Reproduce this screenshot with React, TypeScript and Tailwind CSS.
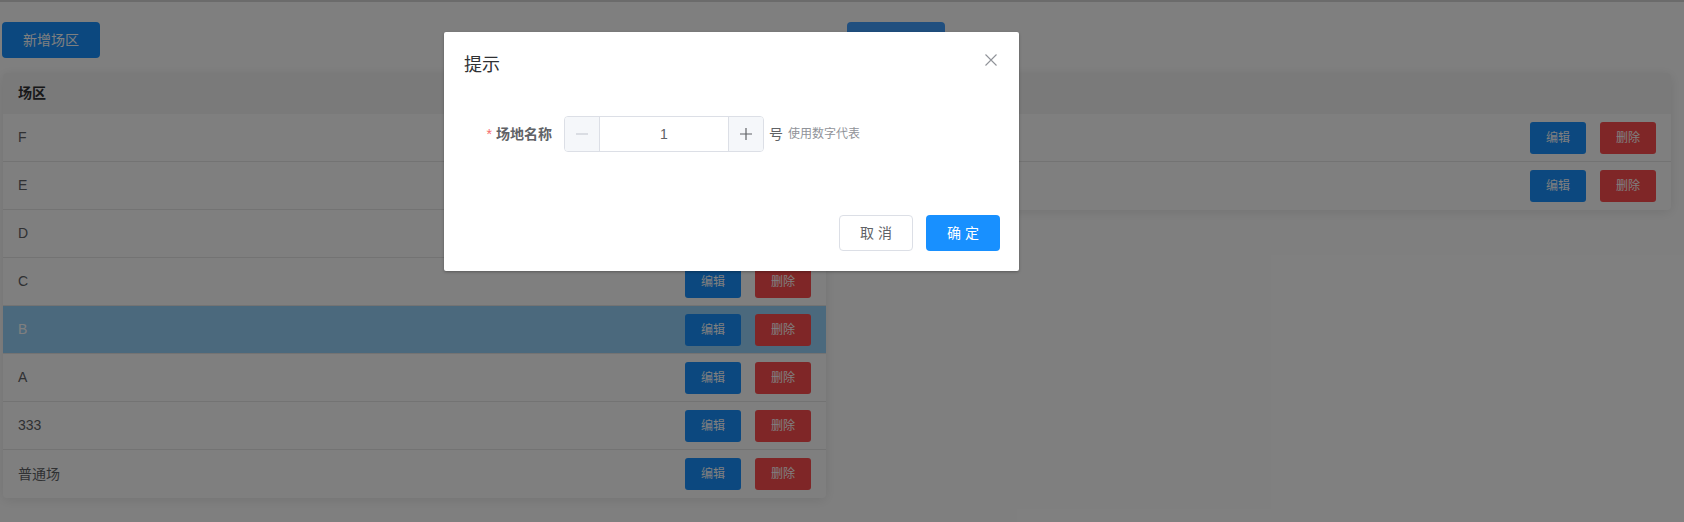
import React from 'react';

type Row = {
    name: string;
    active?: boolean;
};

const leftRows: Row[] = [
    { name: 'F' },
    { name: 'E' },
    { name: 'D' },
    { name: 'C' },
    { name: 'B', active: true },
    { name: 'A' },
    { name: '333' },
    { name: '普通场' },
];

const rightRows: Row[] = [{ name: '1号' }, { name: '2号' }];

const TableCard: React.FC<{ title: string; rows: Row[]; className?: string }> = ({ title, rows, className }) => (
    <div className={`bg-white rounded-[4px] shadow-[0_2px_12px_0_rgba(0,0,0,0.1)] overflow-hidden ${className ?? ''}`}>
        <div className="h-[41px] bg-[#f5f5f5] flex items-center pl-[15px] text-[14px] font-bold text-[#303133]">
            {title}
        </div>
        {rows.map((row, i) => (
            <div
                key={row.name}
                className={`h-[48px] flex items-center justify-between pl-[15px] pr-[15px] text-[14px] ${i < rows.length - 1 ? 'border-b border-[#e6e6e6]' : ''} ${row.active ? 'bg-[#96d3fb] text-white' : 'text-[#606266]'}`}
            >
                <span>{row.name}</span>
                <div className="flex gap-[14px]">
                    <button className="w-[56px] h-[32px] rounded-[3px] bg-[#1890ff] text-white text-[12px]">编辑</button>
                    <button className="w-[56px] h-[32px] rounded-[3px] bg-[#ff4d4f] text-white text-[12px]">删除</button>
                </div>
            </div>
        ))}
    </div>
);

const App: React.FC = () => {
    return (
        <div className="relative w-full h-[522px] overflow-hidden bg-white font-['Liberation_Sans','Noto_Sans_CJK_SC',sans-serif]">
            <div className="border-t-2 border-[#d6d6d6]" />
            <div className="flex gap-[20px] pl-[2px] pt-[20px]">
                <div className="w-[825px] flex flex-col gap-[15px]">
                    <button className="w-[98px] h-[36px] rounded-[4px] bg-[#1890ff] text-white text-[14px]">新增场区</button>
                    <TableCard title="场区" rows={leftRows} className="ml-[1px] w-[823px]" />
                </div>
                <div className="w-[825px] flex flex-col gap-[15px]">
                    <button className="w-[98px] h-[36px] rounded-[4px] bg-[#409eff] text-white text-[14px]">新增场地</button>
                    <TableCard title="场地" rows={rightRows} className="w-[824px]" />
                </div>
            </div>

            {/* mask */}
            <div className="absolute inset-0 bg-black/50" />

            {/* dialog */}
            <div className="absolute left-[444px] top-[32px] w-[575px] bg-white rounded-[2px] shadow-[0_1px_3px_rgba(0,0,0,0.3)]">
                <div className="relative pt-[20px] px-[20px] pb-[10px]">
                    <span className="block text-[18px] leading-[24px] text-[#303133] pt-[1px] h-[24px]">提示</span>
                    <button className="absolute right-[22px] top-[22px] w-[12px] h-[12px]">
                        <svg width="12" height="12" viewBox="0 0 12 12" fill="none" stroke="#909399" strokeWidth="1.1">
                            <path d="M0.5 0.5 L11.5 11.5 M11.5 0.5 L0.5 11.5" />
                        </svg>
                    </button>
                </div>
                <div className="px-[20px] py-[30px]">
                    <div className="flex items-center h-[36px] mb-[23px]">
                        <label className="w-[100px] pr-[12px] text-right text-[14px] font-bold text-[#606266]">
                            <span className="text-[#f56c6c] mr-[4px] font-normal">*</span>场地名称
                        </label>
                        <div className="flex w-[200px] h-[36px] border border-[#dcdfe6] rounded-[4px] overflow-hidden">
                            <span className="w-[35px] h-full bg-[#f5f7fa] border-r border-[#dcdfe6] flex items-center justify-center text-[#c0c4cc]">
                                <svg width="14" height="14" viewBox="0 0 14 14" stroke="currentColor" strokeWidth="1.2">
                                    <path d="M1 7 H13" />
                                </svg>
                            </span>
                            <div className="flex-1 flex items-center justify-center">
                                <span className="text-[14px] text-[#606266]">1</span>
                            </div>
                            <span className="w-[35px] h-full bg-[#f5f7fa] border-l border-[#dcdfe6] flex items-center justify-center text-[#606266]">
                                <svg width="14" height="14" viewBox="0 0 14 14" stroke="currentColor" strokeWidth="1.2">
                                    <path d="M1 7 H13 M7 1 V13" />
                                </svg>
                            </span>
                        </div>
                        <span className="ml-[5px] text-[14px] leading-[20px] text-[#606266]">号</span>
                        <span className="ml-[5px] text-[12px] leading-[16px] text-[#909399]">使用数字代表</span>
                    </div>
                </div>
                <div className="flex justify-end gap-[13px] pt-[10px] pl-[20px] pr-[19px] pb-[20px]">
                    <button className="w-[74px] h-[36px] rounded-[4px] border border-[#dcdfe6] bg-white text-[14px] text-[#606266]">取 消</button>
                    <button className="w-[74px] h-[36px] rounded-[4px] bg-[#1890ff] text-[14px] text-white">确 定</button>
                </div>
            </div>
        </div>
    );
};

export default App;
